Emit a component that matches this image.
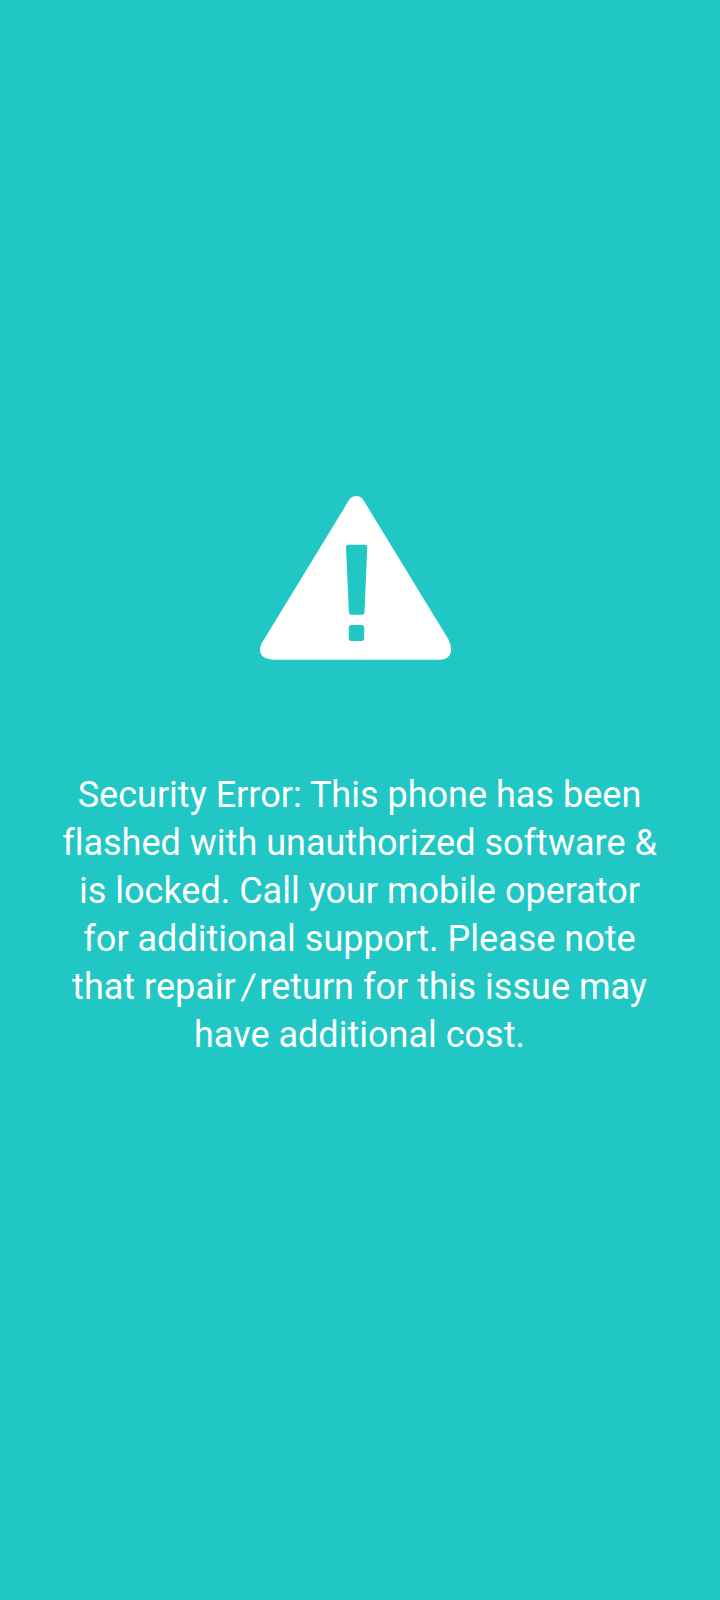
const lines = [
  "Security Error: This phone has been",
  "flashed with unauthorized software &",
  "is locked. Call your mobile operator",
  "for additional support. Please note",
];

function WarningIcon() {
  return (
    <svg className="ml-[260px] block h-[164px] w-[191px]" viewBox="0 0 191 164" aria-hidden="true">
      <path
        fill="#fff"
        d="M84.700 11.300C88.300 5.400 89.900 0 96.200 0C102.500 0 104.200 5.400 107.800 11.300L188.200 143C190 146.500 191 150 191 154C191 160 186.500 163.700 180 163.700H15C6 163.700 0 160.500 0 154C0 149.500 1.800 147.300 4 143.500Z"
      />
      <path
        fill="#21c7c5"
        d="M88.300 48.700H105Q107.400 48.700 107.300 51.200L104.500 116.200Q104.400 118.700 101.900 118.700H91.500Q89 118.700 88.900 116.200L86 51.200Q85.900 48.700 88.300 48.700Z"
      />
      <rect x="88.800" y="129" width="15.400" height="16" rx="2.800" fill="#21c7c5" />
    </svg>
  );
}

export default function App() {
  return (
    <main className="h-[1600px] w-[720px] bg-[#21c7c5] pt-[496px]">
      <WarningIcon />
      <p className="mt-[111px] pr-px text-center font-[Roboto,sans-serif] text-[36px] leading-[48px] tracking-[0.01px] whitespace-nowrap text-white [font-variant-ligatures:none]">
        {lines.map((line) => (
          <span key={line} className="block">{line}</span>
        ))}
        <span className="block">
          that repair<span className="mr-[3.6px] ml-[5px] inline-block -skew-x-4">/</span>return for this issue may
        </span>
        <span className="block">have additional cost.</span>
      </p>
    </main>
  );
}
